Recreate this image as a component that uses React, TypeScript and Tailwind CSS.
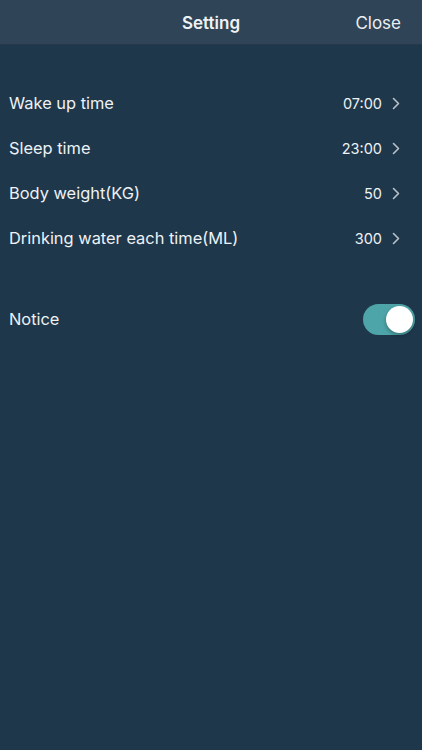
import React, { useState } from 'react';

const rows = [
  { label: 'Wake up time', value: '07:00' },
  { label: 'Sleep time', value: '23:00' },
  { label: 'Body weight(KG)', value: '50' },
  { label: 'Drinking water each time(ML)', value: '300' },
];

const Chevron = () => (
  <svg width="8" height="13" viewBox="0 0 8 13" fill="none" className="ml-[10px]">
    <path d="M1.5 1.5L6.5 6.5L1.5 11.5" stroke="#b9c2ca" strokeWidth="1.6" strokeLinecap="round" strokeLinejoin="round" />
  </svg>
);

const App = () => {
  const [notice, setNotice] = useState(true);

  return (
    <div className="min-h-screen w-full bg-[#1f374b] text-[#eef2f5]" style={{ fontFamily: 'Inter, "Noto Sans", sans-serif' }}>
      <header className="relative flex h-[45px] items-center justify-center border-b border-[#26394a] bg-[#2f4456] pt-[3px]">
        <h1 className="text-[17px] font-semibold">Setting</h1>
        <button className="absolute right-[21px] text-[17px] text-[#e9eef2]">Close</button>
      </header>

      <div className="mt-[36px]">
        {rows.map((row) => (
          <div key={row.label} className="flex h-[45px] items-center justify-between pl-[9px] pr-[22px]">
            <span className="text-[16.4px]">{row.label}</span>
            <div className="flex items-center">
              <span className="text-[14.5px]">{row.value}</span>
              <Chevron />
            </div>
          </div>
        ))}
      </div>

      <div className="mt-[36px] flex h-[45px] items-center justify-between pl-[9px] pr-[7px]">
        <span className="text-[16.4px]">Notice</span>
        <button
          onClick={() => setNotice(!notice)}
          className={`flex h-[31px] w-[52px] items-center rounded-full p-[2px] transition ${notice ? 'justify-end bg-[#4ea5a9]' : 'justify-start bg-[#3a4f61]'}`}
        >
          <span className="h-[27px] w-[27px] rounded-full bg-white shadow-[0_2px_4px_rgba(0,0,0,0.3)]" />
        </button>
      </div>
    </div>
  );
};

export default App;
